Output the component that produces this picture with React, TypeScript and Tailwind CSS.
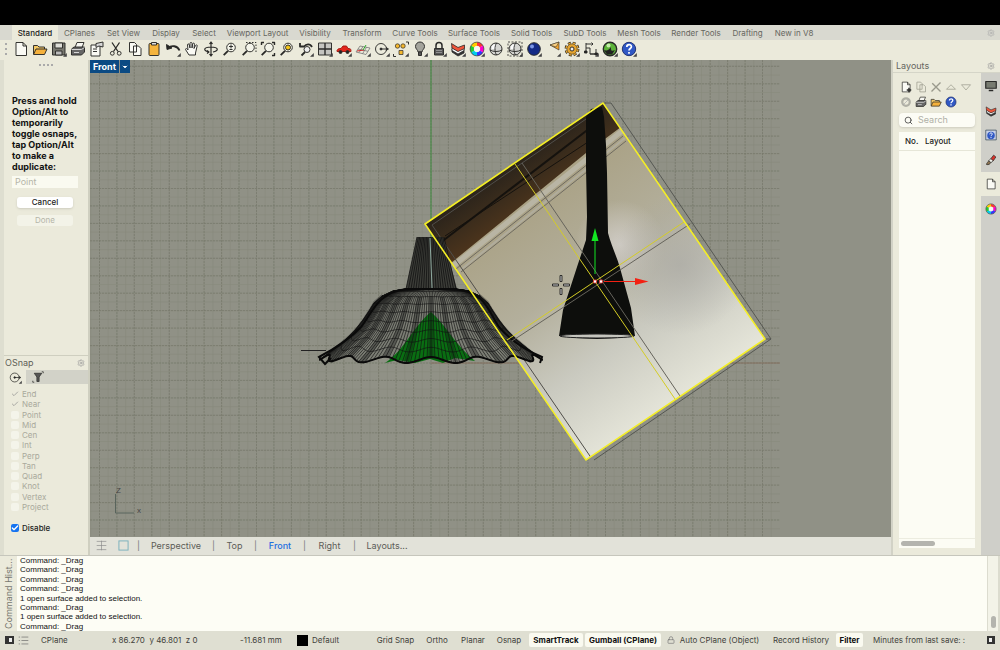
import type { ReactNode } from "react";
import { Check, ChevronDown, Settings, Lock, Search } from "lucide-react";

function Ico({ children, size = "size-[16px]" }: { children: ReactNode; size?: string }) {
  return (
    <svg viewBox="0 0 16 16" className={`${size} shrink-0`} fill="none" stroke="#2a2a28" strokeWidth=".95" strokeLinejoin="round" aria-hidden="true">
      {children}
    </svg>
  );
}

const Corner = () => <path d="M15.8 12v3.8H12z" fill="#444" stroke="none" />;
const page = <path d="M3 1.500h7l3.500 3.500v9.500H3zM10 1.500V5h3.500" fill="#fafaf4" />;
const folder = (
  <>
    <path d="M1.500 13V4.500h4l1.500 1.500h5.500v2" fill="#f3c763" />
    <path d="M1.500 13.500l2.500-5.500h11l-2.500 5.500z" fill="#f5b13c" />
  </>
);
const printer = (
  <>
    <path d="M5 6.500L7 1.500h7l-2 5z" fill="#f7f7f2" />
    <path d="M1.500 8l2.500-2h10.500v5l-3 3h-10z" fill="#666" />
    <path d="M1.500 8.500h10l3-2M4 11.500h5" stroke="#ddd" />
  </>
);
const help = (
  <>
    <circle cx="8" cy="8" r="6.700" fill="#3058c4" stroke="#1d2e70" />
    <path d="M5.800 6c0-3 4.600-3 4.600-.3C10.400 7.600 8 7.500 8 9.600M8 11v1.800" stroke="#fff" strokeWidth="1.700" />
  </>
);
const wheel = (
  <g strokeWidth="3.600">
    <path d="M8 3a5 5 0 0 1 4.300 2.500" stroke="#f33" />
    <path d="M12.300 5.500a5 5 0 0 1 0 5" stroke="#f0c" />
    <path d="M12.300 10.500A5 5 0 0 1 8 13" stroke="#33f" />
    <path d="M8 13a5 5 0 0 1-4.300-2.500" stroke="#0ce" />
    <path d="M3.700 10.500a5 5 0 0 1 0-5" stroke="#2c3" />
    <path d="M3.700 5.500A5 5 0 0 1 8 3" stroke="#fc0" />
    <circle cx="8" cy="8" r="6.900" stroke="#333" strokeWidth=".7" />
    <circle cx="8" cy="8" r="3" fill="#f7f7f2" stroke="none" />
  </g>
);
const layers = (
  <g strokeWidth=".8">
    <path d="M2 8v3l6 4 6-3V8L8 11z" fill="#333" />
    <path d="M2 6.500v3l6 3.500 6-3.500v-3L8 10z" fill="#f7f7f7" />
    <path d="M1.500 2.500l6.500 4L14.500 4v3.500L8 10.500 2 7z" fill="#f0553a" />
  </g>
);
const sphere = (
  <>
    <circle cx="8" cy="8" r="6" fill="#d4d4d0" />
    <path d="M4 5a5 5 0 0 1 4-2v5H3.500z" fill="#fbfbfb" stroke="none" />
    <path d="M8.500 2c-2 3-2 9 0 12M2 9c3 2 9 2 12 0" />
  </>
);
const lens = (
  <>
    <circle cx="9" cy="6.500" r="4.300" fill="#f4f4ea" />
    <path d="M6 9.800l-4.300 4.400" strokeWidth="1.800" />
  </>
);
const undo = (
  <>
    <path d="M1.500 3.500l.5 5 5-1.500z" fill="#222" />
    <path d="M3 7c3.500-3 9.500-2.500 11.500 2.500" strokeWidth="1.800" />
  </>
);

const tools: [string, ReactNode][] = [
  ["New", page],
  ["Open", folder],
  ["Save", <><path d="M1.500 2h12.500v12h-12.500z" fill="#77776f" /><path d="M4 2h7.500v5H4z" fill="#deded8" /><path d="M4.500 10h6.500v4H4.500z" fill="#bbb" /><Corner /></>],
  ["Print", printer],
  ["Properties", <><path d="M2 4h9v11H2zM4 8h4M4 10.500h4" fill="#fafaf4" /><path d="M7 6.500V2.500L14 1v5L10 5z" fill="#d8d8d8" /></>],
  ["Cut", <><path d="M4 1.500l6 9M11.500 1.500l-6 9" strokeWidth="1.300" /><circle cx="4.300" cy="12.300" r="1.900" /><circle cx="11.200" cy="12.300" r="1.900" /></>],
  ["Copy", <path d="M2.500 1.500h5l2 2v7.500h-7zM6.500 5h5l2.500 2.500v7h-7.500z" fill="#fafaf4" />],
  ["Paste", <><rect x="3" y="2.500" width="10" height="12" rx="1" fill="#f5b43c" /><path d="M5.500 1.500h5v2.500h-5z" fill="#ddd" /></>],
  ["Undo", <>{undo}<Corner /></>],
  ["Pan", <path d="M5 14L1.500 8.500c0-1.500 1.500-1 2.500.5L3.500 4c0-1.500 1.500-1.500 1.800 0L6 7V2.500C6 1 8 1 8 2.500V7l.7-4c.3-1.500 2-1 1.800.3L10 7.500l1.500-3c.8-1.300 2-.5 1.600.7L11.500 12v2z" fill="#fafaf4" />],
  ["Rotate view", <path d="M8 1v14M6.500 3L8 1l1.500 2M6.500 13L8 15l1.500-2M6 11C0 10 0 6 8 6s8 4 2 5M4 9.500L6 11l-2 1.500" strokeWidth="1.200" />],
  ["Zoom dynamic", <>{lens}<path d="M7 5.500h4M9 3.500v4M7.500 8.500h3" /></>],
  ["Zoom window", <><path d="M5 1.500h10v10" strokeDasharray="1.500 1.500" />{lens}</>],
  ["Zoom extents", <>{lens}<path d="M1.500 4V1.500H4M12 1.500h2.500V4M14.500 12v2.500H12" strokeWidth="1.400" /></>],
  ["Zoom selected", <>{lens}<circle cx="9" cy="6.500" r="2.500" fill="#f5c518" /></>],
  ["Undo view", <><path d="M2 2v3.500h4C8 3 12 2 14 6" strokeWidth="1.800" /><circle cx="9" cy="8.500" r="3" fill="#eee" /><path d="M7 11l-3.500 3.500" strokeWidth="1.800" /><Corner /></>],
  ["Four viewports", <><path d="M1.500 2h13v12h-13z" fill="#c4c4c0" /><path d="M1.500 8h13M8 2v12" strokeWidth="1.400" /><Corner /></>],
  ["Car", <><path d="M1 9.500c1-2 2-2 4-2L7 5h3.500l1.500 2.500c3 0 3 1 3 3H1z" fill="#e3261b" stroke="#a01812" /><circle cx="4.500" cy="11" r="1.500" fill="#222" /><circle cx="11.500" cy="11" r="1.500" fill="#222" /><Corner /></>],
  ["Construction plane", <><path d="M5 5l10 2-4 6.500L1 11zM8 5.600L4 11.600M11.500 6.300l-4 6.500M3 8l10 2.300" stroke="#777" strokeWidth=".8" /><path d="M2 10l7-1" stroke="#c22" /><path d="M8 9l3-5" stroke="#2a2" /><Corner /></>],
  ["Object snap", <><circle cx="7" cy="8" r="5.500" strokeWidth=".9" /><path d="M7 8h7M12 6.500L14.500 8 12 9.500" /><circle cx="7" cy="8" r="1" fill="#222" /><Corner /></>],
  ["Selection", <><g fill="#f5b82e" strokeWidth=".7"><circle cx="4.500" cy="5" r="2.200" /><circle cx="10" cy="5" r="2.200" /><rect x="6" y="9.500" width="4" height="4" /></g><path d="M13 1h2.500v2.500M.5 13v2.500H3" /><Corner /></>],
  ["Show", <><path d="M6 11c0-2-2.500-3-2.500-5.500a4.500 4.500 0 0 1 9 0C12.500 8 10 9 10 11z" fill="#a4a49c" /><path d="M6.500 11h3v3.500h-3z" fill="#555" /><Corner /></>],
  ["Lock", <><path d="M5 8V4.500c0-4 6-4 6 0V8" strokeWidth="1.500" /><rect x="3.500" y="7.500" width="9" height="6.500" fill="#555" /><path d="M5 9.500h6M5 11.500h6" stroke="#aaa" strokeWidth=".7" /><Corner /></>],
  ["Layers", <>{layers}<Corner /></>],
  ["Colour", <>{wheel}<Corner /></>],
  ["Shade", sphere],
  ["Shade selected", <><path d="M1 1h14v14H1z" strokeDasharray="2 1.500" strokeWidth=".8" />{sphere}<Corner /></>],
  ["Render", <><circle cx="8" cy="8" r="6.300" fill="#142a86" /><circle cx="6" cy="5.500" r="2" fill="#7c97e6" stroke="none" /><Corner /></>],
  ["Spotlight", <><path d="M5 4l9-3v8z" fill="#f3a32c" strokeWidth=".6" /><path d="M5 4l9-3-3 5z" fill="#f7cf82" strokeWidth=".5" /><Corner /></>],
  ["Options", <><circle cx="8" cy="8" r="6.200" strokeWidth="2.400" strokeDasharray="2.900 1.970" /><circle cx="8" cy="8" r="5.200" fill="#e5a42e" strokeWidth=".6" /><circle cx="8" cy="8" r="6" stroke="#e5a42e" strokeWidth="1.400" strokeDasharray="2.300 2.410" strokeDashoffset="-.3" /><circle cx="8" cy="8" r="2" fill="#eee" /><Corner /></>],
  ["Dimension", <><path d="M3 2v9M3 3h7M8.500 1.500L10 3 8.500 4.500M3 7h4v6h6V8M7 13h6" /><path d="M1.500 10h2.500v2H1.500zM12 12h2.500v2H12z" fill="#222" /><Corner /></>],
  ["Rhino", <><circle cx="8" cy="8" r="6.700" fill="#5cb338" strokeWidth="1.400" /><path d="M2 9c3 1 5 0 7-3-.5 5 2 4 4 3l-3 4.500H5z" fill="#222" stroke="none" /><circle cx="6.500" cy="4.500" r="2" fill="#c4ebaa" stroke="none" /><Corner /></>],
  ["Help", <>{help}<Corner /></>],
];

const tabs: [string, string][] = [
  ["Standard", "w-[46px]"], ["CPlanes", "w-[43px]"], ["Set View", "w-[45px]"], ["Display", "w-[40px]"],
  ["Select", "w-[36px]"], ["Viewport Layout", "w-[71px]"], ["Visibility", "w-[44px]"], ["Transform", "w-[50px]"],
  ["Curve Tools", "w-[56px]"], ["Surface Tools", "w-[62px]"], ["Solid Tools", "w-[53px]"], ["SubD Tools", "w-[54px]"],
  ["Mesh Tools", "w-[54px]"], ["Render Tools", "w-[60px]"], ["Drafting", "w-[43px]"], ["New in V8", "w-[50px]"],
];

const snaps = ["End", "Near", "Point", "Mid", "Cen", "Int", "Perp", "Tan", "Quad", "Knot", "Vertex", "Project"];

const history = [
  "Command: _Drag", "Command: _Drag", "Command: _Drag", "Command: _Drag",
  "1 open surface added to selection.", "Command: _Drag", "1 open surface added to selection.", "Command: _Drag",
];

/* Shade profile: radius and height from the collar down to the rim. */
const profile: [number, number][] = [
  [25, 289], [38, 291], [49, 296], [57, 303], [62, 311], [68, 320], [75, 329], [84, 338], [95, 347], [108, 357],
];

function shadePoint(theta: number, i: number): [number, number] {
  const [r, y] = profile[i];
  const v = i / (profile.length - 1);
  const ripple = Math.cos(14 * theta) * v * v;
  const x = 431 + r * Math.cos(theta) * (1 + 0.035 * ripple);
  return [x, y + 3 * ripple + 3 * v * Math.sin(theta)];
}

const toPath = (pts: [number, number][]) => "M" + pts.map(([x, y]) => `${x.toFixed(1)} ${y.toFixed(1)}`).join("L");
const range = (n: number) => Array.from({ length: n }, (_, i) => i);
const ribs = range(85).map((k) => toPath(profile.map((_, i) => shadePoint((k / 84) * Math.PI, i)))).join("");
const ringAt = (i: number) => toPath(range(121).map((k) => shadePoint((k / 120) * Math.PI, i)));
const rings = profile.map((_, i) => ringAt(i)).join("");
const fills = toPath([
  ...profile.map((_, i) => shadePoint(Math.PI, i)),
  ...range(121).map((k) => shadePoint(Math.PI - (k / 120) * Math.PI, 9)),
  ...profile.map((_, i) => shadePoint(0, 9 - i)),
]);
/* Folds of the shade, drawn as darker ribs. */
const folds = range(13).map((k) => toPath(profile.slice(2).map((_, i) => shadePoint(((k + 1) / 14) * Math.PI, i + 2)))).join("");
const neck = range(21).map((k) => `M${417 + k * 1.35} 237L${406 + k * 2.5} 289`).join("");
const minor = [
  ...range(40).map((k) => `M${(82 + k * 17.45).toFixed(1)} 0V700`),
  ...range(40).map((k) => `M0 ${(14 + k * 17.45).toFixed(1)}H780`),
].join("");
const fine = [
  ...range(80).map((k) => `M${(82 + k * 8.725).toFixed(1)} 0V700`),
  ...range(80).map((k) => `M0 ${(14 + k * 8.725).toFixed(1)}H780`),
].join("");

function Scene() {
  return (
    <svg viewBox="90 60 801 477" preserveAspectRatio="xMidYMid slice" className="absolute inset-0 size-full" fill="none" role="img" aria-label="Front viewport">
      <defs>
        <linearGradient id="wall" gradientUnits="userSpaceOnUse" x1="490" y1="230" x2="640" y2="440">
          <stop offset="0" stopColor="#aaa286" />
          <stop offset=".35" stopColor="#b3af9c" />
          <stop offset=".65" stopColor="#cacac0" />
          <stop offset="1" stopColor="#e8e8dc" />
        </linearGradient>
        <radialGradient id="glow" gradientUnits="userSpaceOnUse" cx="620" cy="245" r="45">
          <stop offset="0" stopColor="#cfcbc4" />
          <stop offset="1" stopColor="#cfcbc4" stopOpacity="0" />
        </radialGradient>
        <radialGradient id="dim" gradientUnits="userSpaceOnUse" cx="680" cy="265" r="70">
          <stop offset="0" stopColor="#aaa9a4" stopOpacity=".7" />
          <stop offset="1" stopColor="#aaa9a4" stopOpacity="0" />
        </radialGradient>
        <linearGradient id="wood" gradientUnits="userSpaceOnUse" x1="512" y1="160" x2="540" y2="200">
          <stop offset="0" stopColor="#28221b" />
          <stop offset=".45" stopColor="#382b1c" />
          <stop offset="1" stopColor="#4c341c" />
        </linearGradient>
        <clipPath id="board"><path d="M425 224L603 103 765 339 586 460z" /></clipPath>
      </defs>
      <path d={fine} stroke="#87887a" strokeWidth=".5" />
      <path d={minor} stroke="#77796c" strokeWidth=".7" strokeDasharray="2 1" />
      <path d="M431 60V237" stroke="#3f8a3f" />
      <path d="M431 363H780" stroke="#857060" />
      <path d="M301 350.500H326" stroke="#222" />
      <g clipPath="url(#board)">
        <path d="M420 100H770V462H420z" fill="url(#wall)" />
        <path d="M420 100H770V462H420z" fill="url(#glow)" />
        <path d="M420 100H770V462H420z" fill="url(#dim)" />
        <path d="M420 220L603 98 621 127 586 153 451 263z" fill="url(#wood)" />
        <path d="M440 243L590 128" stroke="#15120e" strokeWidth="2" />
        <path d="M445 236L588 142" stroke="#15120e" />
        <path d="M453 266L622 131" stroke="#b9b5a4" strokeWidth="5" />
        <path d="M456 269L623 136M461 272L626 141" stroke="#6e6a60" />
        <path d="M458 272L625 138" stroke="#b0ac9c" strokeWidth="2" />
        <path d="M432 225L602 108M432 225L592 459" stroke="#504e4a" />
      </g>
      <path d="M417 237H443L457 289H406z" fill="#3c3d38" />
      <path d={neck} stroke="#111" strokeWidth=".8" />
      <path d="M430 238L432 288" stroke="#8faaa0" />
      <path d={fills} fill="#777970" fillOpacity=".8" />
      <path d="M431 312C445 324 456 346 475 361L455 358 443 363 430 359 415 363 397 360 385 363C405 350 414 325 431 312z" fill="#096e12" />
      <path d={folds} stroke="#111" strokeOpacity=".35" strokeWidth="5" />
      <path d={ribs} stroke="#111" strokeWidth=".65" />
      <path d={rings} stroke="#111" strokeWidth=".65" />
      <path d={ringAt(9)} stroke="#0a0a0a" strokeWidth="2" />
      <path d="M406 289H457M406 289C376 293 372 314 361 327C350 339 336 348 319 357L325 364 331 358M456 289C486 293 488 311 499 327C511 341 525 350 542 357L540 363" stroke="#0a0a0a" strokeWidth="2" />
      <path d="M611 103L771 339 594 460M603 103H611M765 339H771" stroke="#555752" />
      <path d="M586 117L591 109 602 107 604 117 606 145 607 173 608 233C611 245 617 257 620 268L631 308 635 336Q597 342 559 336L563 310 577 267 586 240 587 217 586 167z" fill="#0d0e0c" />
      <ellipse cx="597" cy="336" rx="37" ry="2" fill="#c5c5be" stroke="#222" />
      <path d="M522 163L680 396M690 224L512 341" stroke="#66645c" />
      <path d="M515 164L675 399M684 222L507 340" stroke="#d4cc25" />
      <path d="M425 224L603 103 765 339 586 460z" stroke="#f4ee25" strokeWidth="1.600" />
      <path d="M595 274V240" stroke="#12e622" />
      <path d="M595 228L598.500 241H591.500z" fill="#12e622" />
      <path d="M604 281.500H636" stroke="#f32113" />
      <path d="M648.500 281.500L635 285V278z" fill="#f32113" />
      <path d="M593.500 280h3v3h-3zM599.500 280h3v3h-3z" fill="#fff" stroke="#d33" strokeWidth=".8" />
      <path d="M552.500 284h6v2h-6zM563.500 284h6v2h-6zM560 275.500h2v6h-2zM560 288.500h2v6h-2z" fill="#bbb" stroke="#111" strokeWidth=".8" />
      <path d="M115.500 494V513H134" stroke="#59645c" />
      <text x="116" y="493" fontSize="8" fontFamily="Liberation Sans, sans-serif" fill="#444">Z</text>
      <text x="137" y="513" fontSize="8" fontFamily="Liberation Sans, sans-serif" fill="#444">x</text>
    </svg>
  );
}

function LeftPanel() {
  return (
    <aside className="flex w-[90px] shrink-0 flex-col border-r-2 border-[#cfcfc0] border-l-4 border-l-[#deded0]">
      <svg viewBox="0 0 16 2" className="mx-auto mt-[4px] h-[2px] w-[16px]" aria-hidden="true"><path d="M1 1h2M5 1h2M9 1h2M13 1h2" stroke="#aaa" strokeWidth="2" /></svg>
      <div className="mt-[29px] flex flex-col px-[8px] pr-[10px]">
        <label htmlFor="point" className="whitespace-nowrap text-[9px] font-bold leading-[11px] text-[#111]">
          Press and hold<br />Option/Alt to<br />temporarily<br />toggle osnaps,<br />tap Option/Alt<br />to make a<br />duplicate:
        </label>
        <input id="point" placeholder="Point" className="mt-1 h-[12px] w-full bg-[#fafaf0] px-[3px] text-[9px] placeholder:text-[#b5b5a8]" />
        <button className="mx-[5px] mt-[9px] h-[11px] rounded-[3px] bg-white text-[8px] font-medium leading-[11px] text-[#222] shadow">Cancel</button>
        <button disabled className="mx-[5px] mt-[7px] h-[11px] rounded-[3px] bg-[#f3f3e8] text-[8px] leading-[11px] text-[#b5b5a8]">Done</button>
      </div>
      <section className="mt-auto flex flex-col border-t border-[#cfcfc0] pb-[22px]">
        <header className="flex h-[14px] items-center justify-between pr-[3px] pl-px text-[9px] text-[#5f5f58]">
          OSnap <Settings className="size-[8px] text-[#999]" />
        </header>
        <div className="flex h-[14px]">
          <button aria-label="Snaps" className="flex w-[22px] items-center justify-center"><Ico size="size-[13px]">{tools[19][1]}</Ico></button>
          <button aria-label="Filter" className="flex flex-1 items-center bg-[#d2d2c8] pl-[6px]">
            <Ico size="size-[12px]"><path d="M3 3h10L9.500 8v6h-3V8z" fill="#555" /><path d="M13 1h2v2M1 13v2h2" /></Ico>
          </button>
        </div>
        <div className="mt-[5px] flex h-[123px] flex-col justify-between pl-[7px]">
          {snaps.map((s, i) => (
            <label key={s} className="relative flex items-center gap-[3px] text-[8px] leading-[10px] text-[#a9a99b]">
              <input type="checkbox" disabled defaultChecked={i < 2} className="size-[8px] appearance-none rounded-[2px] bg-[#f4f4ea] checked:bg-transparent" />
              {i < 2 && <Check className="absolute left-0 size-[8px] text-[#888]" />}
              {s}
            </label>
          ))}
        </div>
        <label className="relative mt-[11px] flex items-center gap-[3px] pl-[7px] text-[8px] font-medium leading-[10px] text-[#222]">
          <input type="checkbox" defaultChecked className="size-[8px] appearance-none rounded-[2px] bg-[#1673f0]" />
          <Check className="pointer-events-none absolute left-[7px] size-[8px] text-white" strokeWidth={4} />
          Disable
        </label>
      </section>
    </aside>
  );
}

function ViewTabs() {
  const bar = <span className="w-[3px] text-[#777]" aria-hidden="true">|</span>;
  return (
    <nav className="flex h-[18px] shrink-0 items-center bg-[#e2e2d9] pb-px pl-[6px] text-[9px] text-[#5c5c57]">
      <Ico size="size-[11px]"><path d="M1 2h14M1 8h14M1 14h14M8 1v14" stroke="#888" /></Ico>
      <svg viewBox="0 0 12 12" className="mr-[8px] ml-[11px] size-[11px]" fill="none" aria-hidden="true"><rect x="1" y="1" width="10" height="10" stroke="#76aebb" /></svg>
      {bar}
      <button className="w-[72px]">Perspective</button>{bar}
      <button className="w-[39px]">Top</button>{bar}
      <button className="w-[46px] font-medium text-[#1f6fe0]">Front</button>{bar}
      <button className="w-[47px]">Right</button>{bar}
      <button className="w-[62px]">Layouts...</button>
    </nav>
  );
}

function RightPanel() {
  const grey = "#99998c";
  return (
    <aside className="flex w-[109px] shrink-0 flex-col border-l-2 border-[#d2d2c6]">
      <header className="flex h-[13px] items-center justify-between border-b border-[#d5d5c8] pr-[5px] pl-[3px] text-[9px] text-[#66665f]">
        Layouts <Settings className="size-[8px] text-[#999]" />
      </header>
      <div className="flex flex-1">
        <div className="flex min-w-0 flex-1 flex-col px-[6px] pt-[8px] pb-[7px]">
          <div className="flex gap-[3px] pl-px">
            <button aria-label="New layout"><Ico size="size-[12px]">{page}<path d="M12 9v6M9 12h6" strokeWidth="2" /></Ico></button>
            <button aria-label="Copy layout"><Ico size="size-[12px]"><path d="M2.500 1.500h5l2 2v7.500h-7zM6.500 5h5l2.500 2.500v7h-7.500z" stroke={grey} /></Ico></button>
            <button aria-label="Delete layout"><Ico size="size-[12px]"><path d="M3 3l11 11M14 2L2 14" stroke={grey} strokeWidth="1.800" /></Ico></button>
            <button aria-label="Move up"><Ico size="size-[12px]"><path d="M2 11l6-6 6 6z" stroke={grey} /></Ico></button>
            <button aria-label="Move down"><Ico size="size-[12px]"><path d="M2 5h12l-6 7z" stroke={grey} /></Ico></button>
          </div>
          <div className="mt-[3px] flex gap-[3px] pl-px">
            <button aria-label="Properties"><Ico size="size-[12px]"><circle cx="8" cy="8" r="5" stroke="#b0b0a6" strokeWidth="3" /><path d="M4 12l8-8" stroke="#aaa" /></Ico></button>
            <button aria-label="Print layout"><Ico size="size-[12px]">{printer}</Ico></button>
            <button aria-label="Open layout"><Ico size="size-[12px]">{folder}</Ico></button>
            <button aria-label="Layout help"><Ico size="size-[12px]">{help}</Ico></button>
          </div>
          <label className="mt-[5px] flex h-[14px] shrink-0 items-center gap-[5px] rounded-[4px] bg-[#fcfcf5] px-[5px] shadow-sm">
            <Search className="size-[9px] shrink-0 text-[#333]" />
            <input aria-label="Search" placeholder="Search" className="w-full min-w-0 bg-transparent text-[9px] leading-[12px] placeholder:text-[#b0b0a6]" />
          </label>
          <div className="mt-[5px] flex flex-1 flex-col bg-[#fcfcf4]">
            <table className="w-full text-left text-[8px] text-[#222]">
              <thead><tr className="h-[18px] border-b border-[#e6e6d8]"><th className="w-[26px] pl-[6px] font-medium">No.</th><th className="font-medium">Layout</th></tr></thead>
            </table>
            <div className="mt-auto border-t border-[#ecece0] p-[2px]"><div className="h-[5px] w-[34px] rounded-full bg-[#b4b4ae]" /></div>
          </div>
        </div>
        <div className="flex w-[19px] flex-col items-center bg-[#cfcfc9] text-[#333]">
          <button aria-label="Display panel" className="flex h-[25px] items-center"><Ico size="size-[12px]"><path d="M1 2h14v9H1z" fill="#777a70" strokeWidth="1.600" /><path d="M5 14h6" strokeWidth="2" /></Ico></button>
          <button aria-label="Layers panel" className="flex h-[25px] items-center"><Ico size="size-[12px]">{layers}</Ico></button>
          <button aria-label="Help panel" className="flex h-[24px] items-center"><Ico size="size-[12px]"><path d="M1 1.500h14v13H1z" fill="#c9d2e8" stroke="#345" /><circle cx="8" cy="8.500" r="5" fill="#3058c4" stroke="none" /><path d="M6.300 7c0-2.300 3.400-2.300 3.400-.2C9.700 8.300 8 8 8 9.600M8 10.800v1.400" stroke="#fff" strokeWidth="1.300" /></Ico></button>
          <button aria-label="Materials panel" className="flex h-[25px] items-center"><Ico size="size-[12px]"><path d="M2 14c0-2 2-3 3-5l3 2c-1 2-3 4-6 3z" fill="#8d7250" /><path d="M5 9l3-3 3 3-3 2.500z" fill="#f0f0ea" /><path d="M8 6l3.500-4.500 3 2.500-3.500 5z" fill="#d8322b" /></Ico></button>
          <button aria-label="Layouts panel" className="flex h-[24px] w-full items-center justify-center bg-[#ebeadb]"><Ico size="size-[12px]">{page}</Ico></button>
          <button aria-label="Colour panel" className="flex h-[25px] items-center"><Ico size="size-[12px]">{wheel}</Ico></button>
        </div>
      </div>
    </aside>
  );
}

function StatusBar() {
  const on = "h-[14px] rounded-[2px] bg-[#fafaf0] font-bold text-[#111]";
  return (
    <footer className="flex h-[19px] shrink-0 items-center overflow-hidden whitespace-nowrap bg-[#dfdfd2] pb-px text-[8px] text-[#3f3f3b]">
      <button aria-label="Toggle left panel" className="ml-[5px] h-[8px] w-[9px] border-2 border-l-4 border-[#333] bg-[#eee]" />
      <button aria-label="List" className="ml-[4px] w-[23px]"><Ico size="size-[11px]"><path d="M5 3h10M5 8h10M5 13h10M1 3h2M1 8h2M1 13h2" stroke="#666" /></Ico></button>
      <button className="w-[71px] text-left">CPlane</button>
      <span className="w-[128px] whitespace-pre">x 86.270  y 46.801  z 0</span>
      <span className="w-[57px]">-11.681 mm</span>
      <button className="flex w-[77px] items-center gap-[4px]"><span className="size-[11px] bg-black" />Default</button>
      <button className="w-[43px]">Grid Snap</button>
      <button className="w-[40px]">Ortho</button>
      <button className="w-[32px]">Planar</button>
      <button className="w-[40px]">Osnap</button>
      <button className={`w-[54px] ${on}`}>SmartTrack</button>
      <button className={`mx-[2px] w-[76px] ${on}`}>Gumball (CPlane)</button>
      <Lock className="mx-[4px] size-[8px] shrink-0 text-[#777]" />
      <button className="w-[81px]">Auto CPlane (Object)</button>
      <button className="ml-[9px] w-[64px]">Record History</button>
      <button className={`ml-[3px] w-[27px] ${on}`}>Filter</button>
      <span className="ml-[10px] shrink-0">Minutes from last save: :</span>
      <button aria-label="Toggle right panel" className="mr-[5px] ml-auto h-[8px] w-[8px] shrink-0 border-2 border-r-[3px] border-[#333] bg-[#eee]" />
    </footer>
  );
}

export default function App() {
  return (
    <main className="flex min-h-screen flex-col bg-[#ebeadb] font-[Inter,sans-serif] text-[#333]">
      <div className="h-[25px] bg-black" />
      <nav className="flex h-[15px] items-center bg-[#d9d9d0] pl-[12px] text-[8px] text-[#66665f]">
        {tabs.map(([name, w], i) => (
          <button key={name} className={`h-full shrink-0 whitespace-nowrap ${w} ${i === 0 ? "bg-[#ebeadb] font-medium text-[#222]" : ""}`}>{name}</button>
        ))}
        <Settings className="mr-[5px] ml-auto size-[8px] text-[#aaa]" />
      </nav>
      <div className="flex h-[20px] items-center pb-[2px]">
        <svg viewBox="0 0 11 14" className="h-[14px] w-[11px]" aria-hidden="true"><path d="M6 1v2M6 6v2M6 11v2" stroke="#aaa" strokeWidth="2" /></svg>
        {tools.map(([name, icon]) => (
          <button key={name} aria-label={name} className="flex w-[19px] justify-center"><Ico>{icon}</Ico></button>
        ))}
      </div>
      <div className="flex flex-1">
        <LeftPanel />
        <div className="flex min-w-0 flex-1 flex-col">
          <div className="relative flex-1 overflow-hidden bg-[#909186]">
            <Scene />
            <div className="relative flex h-[13px] gap-px text-[9px] font-bold text-white">
              <button className="bg-[#0b4a83] px-[3px]">Front</button>
              <button aria-label="Viewport menu" className="bg-[#0b4a83] px-px"><ChevronDown className="size-[8px]" fill="currentColor" /></button>
            </div>
          </div>
          <ViewTabs />
        </div>
        <RightPanel />
      </div>
      <section className="flex h-[76px] shrink-0 overflow-hidden border-t border-[#c6c6bc]">
        <h2 className="w-[17px] rotate-180 text-center text-[9px] leading-[17px] text-[#77776f] [writing-mode:vertical-rl]">Command Hist...</h2>
        <div className="grid flex-1 grid-rows-8 bg-[#fdfdf5] pl-[3px] font-['Liberation_Sans',sans-serif] text-[8px] leading-[9px] text-[#111]">
          {history.map((h, i) => <p key={i}>{h}</p>)}
        </div>
        <div className="flex w-[13px] items-end justify-center border-r-2 border-l border-[#dcdccf] bg-[#f3f3e8] pb-[3px]"><div className="h-[12px] w-[5px] rounded-full bg-[#b4b4ae]" /></div>
      </section>
      <StatusBar />
    </main>
  );
}
